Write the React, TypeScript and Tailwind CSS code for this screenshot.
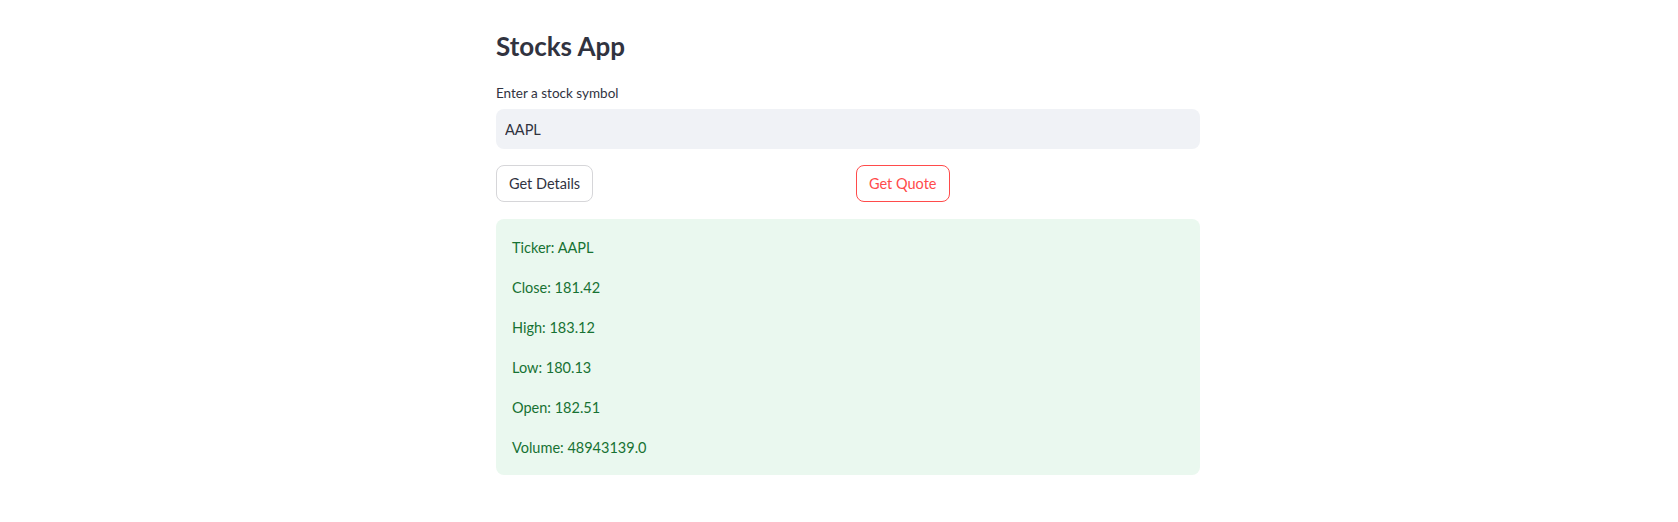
import { useState } from "react";

const quote = [
  "Ticker: AAPL",
  "Close: 181.42",
  "High: 183.12",
  "Low: 180.13",
  "Open: 182.51",
  "Volume: 48943139.0",
];

export default function App() {
  const [symbol, setSymbol] = useState("AAPL");

  return (
    <div className="min-h-[522px] w-full bg-white font-['Lato','Liberation_Sans',sans-serif] text-[#31333f]">
      <div className="ml-[496px] w-[704px] pt-[30px]">
        <h1 className="text-[26px] font-bold leading-[32px]">Stocks App</h1>

        <label className="mt-[21px] mb-[6px] block text-[13.5px] leading-[20px]">
          Enter a stock symbol
        </label>
        <input
          value={symbol}
          onChange={(e) => setSymbol(e.target.value)}
          className="h-10 w-full rounded-lg border border-transparent bg-[#f0f2f6] px-2 text-[14.5px] text-[#31333f] outline-none"
        />

        {/* two columns of buttons */}
        <div className="mt-4 grid grid-cols-2 gap-4">
          <div>
            <button className="h-[37px] rounded-lg border border-[#d6d6d9] bg-white px-3 text-[14.5px] text-[#31333f]">
              Get Details
            </button>
          </div>
          <div>
            <button className="h-[37px] rounded-lg border border-[#ff4b4b] bg-white px-3 text-[14.5px] text-[#ff4b4b]">
              Get Quote
            </button>
          </div>
        </div>

        <div className="mt-[17px] rounded-lg bg-[#eaf8ef] px-4 pt-[17px] pb-[15px] text-[14.5px] leading-6 text-[#177233]">
          {quote.map((line, i) => (
            <p key={line} className={i < quote.length - 1 ? "mb-4" : ""}>
              {line}
            </p>
          ))}
        </div>
      </div>
    </div>
  );
}
